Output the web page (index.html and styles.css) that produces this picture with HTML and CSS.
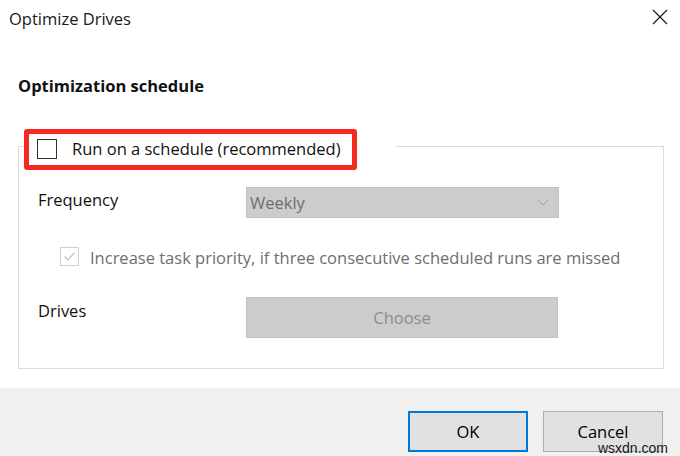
FILE: index.html
```html
<!DOCTYPE html>
<html>
<head>
<meta charset="utf-8">
<link rel="stylesheet" href="styles.css">
</head>
<body>
<div class="dialog">
  <div class="main">
    <div class="titlebar">
      <span class="title">Optimize Drives</span>
      <svg class="close" width="16" height="16" viewBox="0 0 16 16"><path d="M1 1 L15 15 M15 1 L1 15" stroke="#1a1a1a" stroke-width="1.2" fill="none"/></svg>
    </div>
    <div class="heading">Optimization schedule</div>
    <fieldset class="group">
      <legend class="legend">
        <div class="legend-row">
          <span class="box"></span>
          <span class="legend-text">Run on a schedule (recommended)</span>
          <span class="highlight"></span>
        </div>
      </legend>
      <div class="rows">
        <div class="row freq">
          <span class="label freq-label">Frequency</span>
          <div class="select">
            <span>Weekly</span>
            <svg width="12" height="7" viewBox="0 0 12 7"><path d="M0.5 0.5 L6 6 L11.5 0.5" stroke="#a0a0a0" stroke-width="1" fill="none"/></svg>
          </div>
        </div>
        <div class="row check">
          <span class="box disabled">
            <svg width="17" height="17" viewBox="0 0 17 17"><path d="M3.5 8.5 L7 12 L13.5 4.5" stroke="#b8b8b8" stroke-width="1.1" fill="none"/></svg>
          </span>
          <span class="check-text">Increase task priority, if three consecutive scheduled runs are missed</span>
        </div>
        <div class="row drives">
          <span class="label drives-label">Drives</span>
          <div class="choose">Choose</div>
        </div>
      </div>
    </fieldset>
  </div>
  <div class="footer">
    <div class="btn ok">OK</div>
    <div class="btn cancel">Cancel</div>
    <span class="watermark">wsxdn.com</span>
  </div>
</div>
</body>
</html>
```
FILE: styles.css
```css
* { box-sizing: border-box; }
html, body { margin: 0; padding: 0; }
body {
  width: 680px;
  height: 456px;
  overflow: hidden;
  background: #ffffff;
  font-family: "Open Sans", "Noto Sans", sans-serif;
  font-size: 16.5px;
  color: #000;
}
.dialog { display: flex; flex-direction: column; height: 456px; }
.main { height: 388px; background: #fff; display: flex; flex-direction: column; }
.titlebar {
  height: 36px;
  display: flex;
  align-items: center;
  justify-content: space-between;
  padding: 0 12px 0 9px;
}
.title { color: #1a1a1a; line-height: 24px; margin-top: 1px; }
.close { margin-top: -3px; }
.heading {
  margin: 38px 0 0 18px;
  font-weight: 700;
  line-height: 24px;
  color: #111;
}
.group {
  margin: 31px 16px 0 18px;
  padding: 24px 0 30px 0;
  border: 1px solid #dcdcdc;
  min-width: 0;
}
.legend { padding: 0; margin-left: 5px; }
.legend-row {
  position: relative;
  display: flex;
  align-items: center;
  height: 34px;
  padding: 5px 55px 0 13px;
}
.box {
  width: 20px;
  height: 20px;
  border: 1px solid #333;
  background: #fff;
  flex: none;
  display: flex;
  align-items: center;
  justify-content: center;
}
.legend-text { margin-left: 15px; color: #111; line-height: 24px; }
.highlight {
  position: absolute;
  left: 0;
  top: 0;
  width: 333px;
  height: 41px;
  border: 5px solid #f52a1c;
  border-radius: 3px;
}
.rows { padding-left: 19px; display: flex; flex-direction: column; }
.row { display: flex; align-items: center; }
.label { width: 208px; color: #111; line-height: 24px; }
.freq-label { margin-top: -6px; }
.drives-label { align-self: flex-start; margin-top: 2px; }
.freq { height: 31px; }
.select {
  width: 313px;
  height: 31px;
  background: #cccccc;
  border: 1px solid #c2c2c2;
  display: flex;
  align-items: center;
  justify-content: space-between;
  padding: 0 9px 0 3px;
  color: #6e6e6e;
}
.check { height: 32px; margin-top: 22px; padding-left: 22px; }
.box.disabled { width: 19px; height: 19px; border-color: #cfcfcf; }
.check-text { margin-left: 11px; color: #6e6e6e; line-height: 24px; margin-top: 3px; }
.drives { height: 41px; margin-top: 25px; }
.choose {
  width: 312px;
  height: 41px;
  background: #cccccc;
  border: 1px solid #c2c2c2;
  display: flex;
  align-items: center;
  justify-content: center;
  color: #8c8c8c;
}
.footer {
  position: relative;
  flex: 1;
  background: #f0f0f0;
  display: flex;
  justify-content: flex-end;
  align-items: flex-start;
  gap: 15px;
  padding: 23px 17px 0 0;
}
.btn {
  width: 120px;
  height: 41px;
  background: #e1e1e1;
  display: flex;
  align-items: center;
  justify-content: center;
  color: #000;
}
.ok { border: 2px solid #0078d7; }
.cancel { border: 1px solid #adadad; }
.watermark {
  position: absolute;
  right: 12px;
  bottom: 1px;
  font-family: "Liberation Sans", Arial, sans-serif;
  font-size: 14px;
  color: #1a1a1a;
  line-height: 14px;
}
```
